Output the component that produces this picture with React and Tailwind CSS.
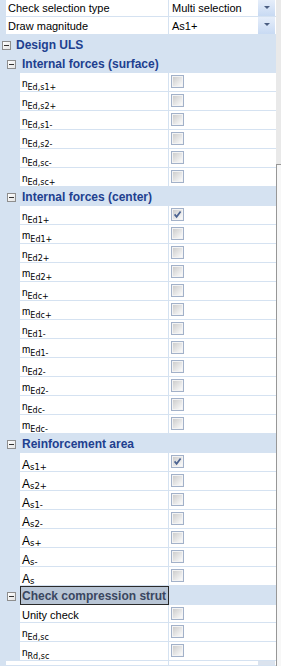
import React from 'react';

const surface = ['Ed,s1+', 'Ed,s2+', 'Ed,s1-', 'Ed,s2-', 'Ed,sc-', 'Ed,sc+'].map((s) => ({ base: 'n', sub: s }));

const center = [
  ['n', 'Ed1+', true], ['m', 'Ed1+'], ['n', 'Ed2+'], ['m', 'Ed2+'], ['n', 'Edc+'], ['m', 'Edc+'],
  ['n', 'Ed1-'], ['m', 'Ed1-'], ['n', 'Ed2-'], ['m', 'Ed2-'], ['n', 'Edc-'], ['m', 'Edc-'],
].map(([base, sub, checked]) => ({ base, sub, checked }));

const area = [['s1+', true], ['s2+'], ['s1-'], ['s2-'], ['s+'], ['s-'], ['s']].map(([sub, checked]) => ({ base: 'A', sub, checked }));

const strut = [{ text: 'Unity check' }, { base: 'n', sub: 'Ed,sc' }, { base: 'n', sub: 'Rd,sc' }];

function Minus({ className }) {
  return (
    <span className={`flex shrink-0 items-center justify-center w-[9px] h-[9px] border border-[#8e8e8e] bg-gradient-to-br from-white to-[#e4e4e4] ${className}`}>
      <span className="w-[5px] h-px bg-[#333]" />
    </span>
  );
}

function Checkbox({ checked }) {
  return (
    <div className="w-[13px] h-[13px] border border-[#a2b1c9] bg-[#f3f3f3] p-px">
      <div className="relative w-full h-full bg-gradient-to-br from-[#cdcdcd] to-[#fbfbfb]">
        {checked && (
          <svg viewBox="0 0 9 9" className="absolute inset-0 w-full h-full">
            <path d="M1.6 4.4 L3.6 6.8 L7.6 1.4" fill="none" stroke="#4b6290" strokeWidth="1.7" />
          </svg>
        )}
      </div>
    </div>
  );
}

function Label({ item }) {
  if (item.text) return item.text;
  if (item.base === 'A') {
    return (
      <>
        <span className="text-[12px] align-[-2px]">A</span>
        <span className="font-['DejaVu_Sans',sans-serif] text-[8.5px] leading-none align-[-3px]">{item.sub}</span>
      </>
    );
  }
  return (
    <>
      <span className="text-[10px]">{item.base}</span>
      <span className="font-['DejaVu_Sans',sans-serif] text-[8px] leading-none align-[-3px]">{item.sub}</span>
    </>
  );
}

function Row({ item }) {
  return (
    <div className="flex h-[19px] border-b border-[#d5e2f1]">
      <div className="w-[20px] bg-[#d5e2f1]" />
      <div className="w-[149px] bg-white border-r border-[#d5e2f1] pl-[2px] pt-[3px] leading-[14px] whitespace-nowrap overflow-hidden">
        <Label item={item} />
      </div>
      <div className="flex-1 bg-white pl-[2px] pt-[2px]">
        <Checkbox checked={item.checked} />
      </div>
    </div>
  );
}

function Header({ title, level, selected }) {
  return (
    <div className={`flex items-start bg-[#d5e2f1] ${level === 0 ? 'h-[20px]' : 'h-[19px]'}`}>
      <Minus className={level === 0 ? 'ml-[2px] mt-[6px]' : 'ml-[7px] mt-[6px]'} />
      <div
        className={
          level === 0
            ? 'ml-[5px] pt-px leading-[18px] font-bold text-[12px] text-[#213f8f]'
            : selected
              ? 'ml-[4px] w-[149px] h-full border border-[#2a2a2a] bg-[#b8c5d5] pl-px leading-[18px] font-bold text-[12px] text-[#3a4660] whitespace-nowrap'
              : 'ml-[4px] pl-[2px] pt-px leading-[18px] font-bold text-[12px] text-[#213f8f] whitespace-nowrap'
        }
      >
        {title}
      </div>
    </div>
  );
}

function TopRow({ label, value, h, pad, dim }) {
  return (
    <div className={`flex ${h} border-b border-[#d5e2f1]`}>
      <div className="w-[6px] bg-[#d5e2f1]" />
      <div className={`w-[163px] bg-white border-r border-[#d5e2f1] pl-[2px] leading-[16px] ${pad}`}>{label}</div>
      <div className="flex flex-1 bg-white">
        <span className={`flex-1 pl-[3px] leading-[16px] ${pad}`}>{value}</span>
        {dim ? (
          <div className="w-[17px] mr-px bg-[#dbe3ee]" />
        ) : (
          <div className="flex items-center justify-center w-[17px] mr-px pb-[2px] bg-gradient-to-b from-[#e6eefa] to-[#c8daf3]">
            <span className="w-0 h-0 border-l-[3px] border-r-[3px] border-t-[3px] border-l-transparent border-r-transparent border-t-[#4b5e82]" />
          </div>
        )}
      </div>
    </div>
  );
}

export default function App() {
  return (
    <div className="flex w-[281px] h-[666px] overflow-hidden bg-white text-[11px] text-black font-['Liberation_Sans',Arial,sans-serif]">
      <div className="w-[276px] shrink-0 flex flex-col">
        <TopRow label="Check selection type" value="Multi selection" h="h-[17px]" pad="" />
        <TopRow label="Draw magnitude" value="As1+" h="h-[18px]" pad="pt-px" />
        <Header title="Design ULS" level={0} />
        <Header title="Internal forces (surface)" level={1} />
        {surface.map((r, i) => <Row key={'s' + i} item={r} />)}
        <Header title="Internal forces (center)" level={1} />
        {center.map((r, i) => <Row key={'c' + i} item={r} />)}
        <Header title="Reinforcement area" level={1} />
        {area.map((r, i) => <Row key={'a' + i} item={r} />)}
        <Header title="Check compression strut" level={1} selected />
        {strut.map((r, i) => <Row key={'t' + i} item={r} />)}
        <TopRow label="" value="" h="h-[18px]" pad="" dim />
      </div>
      <div className="flex-1 flex flex-col bg-[#e9e9e9]">
        <div className="h-[164px]" />
        <div className="flex-1 border-l border-t border-[#979797] bg-[#f7f7f7]" />
      </div>
    </div>
  );
}
